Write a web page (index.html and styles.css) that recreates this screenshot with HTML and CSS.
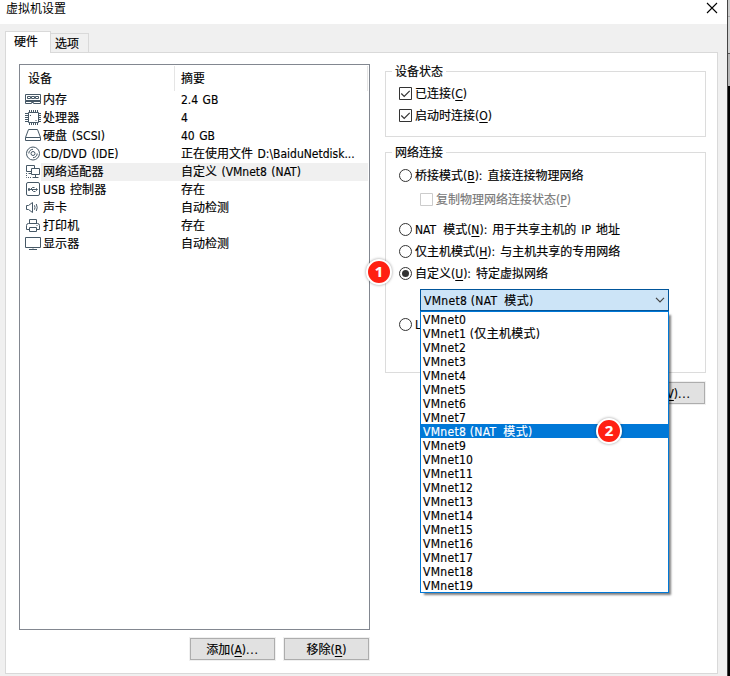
FILE: index.html
```html
<!DOCTYPE html>
<html lang="zh-CN">
<head>
<meta charset="utf-8">
<title>虚拟机设置</title>
<link rel="stylesheet" href="styles.css">
</head>
<body>
<div class="desktop">
<main class="window">
  <header class="titlebar">
    <h1>虚拟机设置</h1>
    <svg class="close" width="12" height="12" viewBox="0 0 12 12"><path d="M1 1l10 10M11 1L1 11"/></svg>
  </header>
  <nav class="tabs">
    <div class="tab active">硬件</div>
    <div class="tab">选项</div>
  </nav>
  <section class="page">
    <div class="left">
      <div class="list">
        <div class="head"><span class="name">设备</span><span class="summary">摘要</span></div>
        <div class="row"><svg class="icon" viewBox="0 0 18 18"><path d="M1.5 3.5h15v6h-15zM1.5 9.5v3h6v-1h2v1h7v-3M1.5 10.5h15"/><path d="M3.5 5.5h3v2h-3zM7.5 5.5h3v2h-3zM11.5 5.5h3v2h-3z"/></svg><span class="name">内存</span><span class="summary">2.4 GB</span></div>
        <div class="row"><svg class="icon" viewBox="0 0 18 18"><path d="M4.5 3.5h10v10h-10z"/><path d="M5.5 1v2M7.5 1v2M9.5 1v2M11.5 1v2M13.5 1v2M5.5 14v2M7.5 14v2M9.5 14v2M11.5 14v2M13.5 14v2M1 4.5h3M1 6.5h3M1 8.5h3M1 10.5h3M1 12.5h3M15 4.5h2M15 6.5h2M15 8.5h2M15 10.5h2M15 12.5h2"/><path d="M6 6.5h1M11.5 11.5h1"/></svg><span class="name">处理器</span><span class="summary">4</span></div>
        <div class="row"><svg class="icon" viewBox="0 0 18 18"><path d="M4.5 2.5h9l3 8v3h-15v-3zM1.5 10.5h15"/></svg><span class="name">硬盘 (SCSI)</span><span class="summary">40 GB</span></div>
        <div class="row"><svg class="icon" viewBox="0 0 18 18"><circle cx="9" cy="8.5" r="6.5"/><circle cx="9" cy="8.5" r="2"/><path d="M4.8 8.5A4.2 4.2 0 0 1 9 4.3M13.2 8.5A4.2 4.2 0 0 1 9 12.7"/></svg><span class="name">CD/DVD (IDE)</span><span class="summary">正在使用文件 D:\BaiduNetdisk...</span></div>
        <div class="row selected"><svg class="icon" viewBox="0 0 18 18"><path d="M7.5 8.5h-5v-6h8v3M4.5 10.5h3M7.5 5.5h8v6h-8zM11.5 11.5v3M8.5 14.5h6"/><path stroke-dasharray="1 1" d="M2.5 10v4.5H8"/></svg><span class="name">网络适配器</span><span class="summary">自定义 (VMnet8 (NAT)</span></div>
        <div class="row"><svg class="icon" viewBox="0 0 18 18"><rect x="2.5" y="1.5" width="13" height="13" rx="1.5"/><path d="M5 8.5h8M6.5 8.5l2-2h2M7.5 8.5l2 2h2M12.3 7.3l1.2 1.2-1.2 1.2M4.5 7.5h1v2h-1z"/></svg><span class="name">USB 控制器</span><span class="summary">存在</span></div>
        <div class="row"><svg class="icon" viewBox="0 0 18 18"><path d="M2.5 6.5h2l4-3v10l-4-3h-2zM10.5 6.3q1 2.2 0 4.4M12.3 5q1.8 3.5 0 7"/></svg><span class="name">声卡</span><span class="summary">自动检测</span></div>
        <div class="row"><svg class="icon" viewBox="0 0 18 18"><path d="M5.5 6.5v-4h7v4M5.5 12.5h-3v-4q0-2 2-2h9q2 0 2 2v4h-3M5.5 10.5h7v4h-7zM12.5 8.5h1"/></svg><span class="name">打印机</span><span class="summary">存在</span></div>
        <div class="row"><svg class="icon" viewBox="0 0 18 18"><path d="M1.5 2.5h15v10h-15zM9 12.5v1M5 14.5h8"/></svg><span class="name">显示器</span><span class="summary">自动检测</span></div>
      </div>
      <div class="actions">
        <button class="btn">添加(<u>A</u>)<span class="dots">...</span></button>
        <button class="btn">移除(<u>R</u>)</button>
      </div>
    </div>
    <div class="right">
      <div class="group status">
        <div class="legend">设备状态</div>
        <label class="option"><svg class="box" viewBox="0 0 13 13"><path class="frame" d="M.5.5h12v12H.5z"/><path d="M2.3 6.5l2.9 2.9 5.5-5.5"/></svg><span class="text">已连接(<u>C</u>)</span></label>
        <label class="option"><svg class="box" viewBox="0 0 13 13"><path class="frame" d="M.5.5h12v12H.5z"/><path d="M2.3 6.5l2.9 2.9 5.5-5.5"/></svg><span class="text">启动时连接(<u>O</u>)</span></label>
      </div>
      <div class="group network">
        <div class="legend">网络连接</div>
        <label class="option"><span class="radio"></span><span class="text">桥接模式(<u>B</u>):<i class="gap"></i>直接连接物理网络</span></label>
        <label class="option sub"><svg class="box" viewBox="0 0 13 13"><path d="M.5.5h12v12H.5z"/></svg><span class="text">复制物理网络连接状态(<u>P</u>)</span></label>
        <label class="option nat"><span class="radio"></span><span class="text">NAT<i class="gap wide"></i>模式(<u>N</u>):<i class="gap"></i>用于共享主机的<i class="gap"></i>IP<i class="gap"></i>地址</span></label>
        <label class="option"><span class="radio"></span><span class="text">仅主机模式(<u>H</u>):<i class="gap"></i>与主机共享的专用网络</span></label>
        <label class="option custom"><span class="radio on"></span><span class="text">自定义(<u>U</u>):<i class="gap"></i>特定虚拟网络</span><span class="badge one">1</span></label>
        <div class="combo">
          <span class="text">VMnet8 (NAT<i class="gap wide"></i>模式)</span>
          <svg width="10" height="6" viewBox="0 0 10 6"><path d="M1 .8l4 4 4-4"/></svg>
          <div class="menu">
            <div>VMnet0</div>
            <div>VMnet1 (仅主机模式)</div>
            <div>VMnet2</div>
            <div>VMnet3</div>
            <div>VMnet4</div>
            <div>VMnet5</div>
            <div>VMnet6</div>
            <div>VMnet7</div>
            <div class="current">VMnet8 (NAT<i class="gap wide"></i>模式)<span class="badge two">2</span></div>
            <div>VMnet9</div>
            <div>VMnet10</div>
            <div>VMnet11</div>
            <div>VMnet12</div>
            <div>VMnet13</div>
            <div>VMnet14</div>
            <div>VMnet15</div>
            <div>VMnet16</div>
            <div>VMnet17</div>
            <div>VMnet18</div>
            <div>VMnet19</div>
          </div>
        </div>
        <label class="option lan"><span class="radio"></span><span class="text">L</span></label>
      </div>
      <button class="btn advanced">高级(<u>V</u>)<span class="dots">...</span></button>
    </div>
  </section>
</main>
<aside class="behind"></aside>
</div>
</body>
</html>
```

FILE: styles.css
```css
* { box-sizing: border-box; }
body {
  margin: 0;
  font: 12px/18px "DejaVu Sans Condensed", "Noto Sans CJK SC", sans-serif;
  color: #000;
  background: #f0f0f0;
  overflow: hidden;
  -webkit-text-stroke: .15px;
}
u { text-underline-offset: 2px; text-decoration-thickness: 1px; text-decoration-skip-ink: none; }
.desktop { display: flex; width: 730px; height: 676px; }
.window { width: 728px; border-right: 1px solid #444; background: #f0f0f0; }
.behind {
  width: 2px;
  background: linear-gradient(#ccc 0 16px, #aaa 16px 17px, #d2d2d2 17px 53px, #555 53px 54px, #b8b8b8 54px 86px, #000 86px);
}

.titlebar { display: flex; justify-content: space-between; height: 24px; padding: 0 9px 0 6px; background: #fff; }
.titlebar h1 { margin: 0; font-size: 12px; font-weight: 400; line-height: 18px; -webkit-text-stroke: 0; }
.close { margin-top: 2px; fill: none; stroke: #000; stroke-width: 1.1; }

.tabs { display: flex; align-items: flex-end; height: 28px; padding-left: 5px; }
.tab { width: 38px; height: 19px; border: 1px solid #d9d9d9; border-left: 0; border-bottom: 0; padding-left: 4px; line-height: 20px; }
.tab.active { position: relative; z-index: 1; width: 46px; height: 22px; margin-bottom: -1px; border-left: 1px solid #d9d9d9; padding-left: 8px; background: #fff; }

.page { display: flex; gap: 15px; width: 713px; height: 622px; margin-left: 5px; padding: 11px 0 0 13px; border: 1px solid #d9d9d9; background: #fff; }
.left { flex: none; width: 351px; }
.list { height: 566px; border: 1px solid #828790; }
.head { display: flex; height: 26px; padding-top: 1px; line-height: 26px; }
.head .name { width: 155px; padding-left: 8px; border-right: 1px solid #e5e5e5; }
.head .summary { width: 193px; padding-left: 6px; border-right: 1px solid #e5e5e5; }
.row { display: flex; height: 18px; line-height: 18px; white-space: nowrap; word-spacing: 1px; }
.icon { flex: none; width: 18px; height: 18px; margin: 0 -1px 0 4px; fill: none; stroke: #465866; stroke-width: 1; }
.row .name { width: 134px; padding-left: 2px; letter-spacing: .1px; }
.row .summary { width: 193px; padding-left: 6px; }
.selected .name, .selected .summary { background: #f0f0f0; }

.actions { display: flex; justify-content: flex-end; gap: 9px; padding: 8px 1px 0 0; }
.btn {
  width: 85px;
  height: 22px;
  padding: 1px 0 0;
  border: 1px solid #adadad;
  outline: 1px solid #f0f0f0;
  background: #e1e1e1;
  color: #000;
  font: inherit;
  line-height: 21px;
}
.dots { letter-spacing: .8px; }

.right { flex: none; width: 321px; padding-top: 7px; }
.group { border: 1px solid #dcdcdc; padding-left: 13px; }
.legend { width: max-content; margin: -9px 0 0 -7px; padding: 0 3px 0 3px; background: #fff; line-height: 18px; }
.status { height: 66px; }
.network { height: 221px; margin-top: 15px; }
.option { display: flex; align-items: center; height: 22px; white-space: nowrap; }
.text { line-height: 18px; padding-top: 1px; }
.status .option:nth-child(2) { margin-top: 1px; }
.box { width: 13px; height: 13px; margin-right: 3px; fill: none; stroke: #333; stroke-width: 1.2; }
.frame { stroke-width: 1; }
.radio { display: flex; width: 13px; height: 13px; margin-right: 3px; border: 1px solid #333; border-radius: 50%; }
.radio.on::after { content: ""; width: 7px; height: 7px; margin: 2px; border-radius: 50%; background: #333; }
.gap { width: 5px; display: inline-block; }
.gap.wide { width: 7px; }
.network .option:nth-child(2) { margin-top: 2px; }
.sub { height: 24px; padding-left: 21px; color: #777; margin-top: 1px; }
.sub .box { stroke: #ccc; stroke-width: 1; }
.nat { margin-top: 7px; }
.custom { position: relative; }
.combo {
  position: relative;
  z-index: 2;
  display: flex;
  align-items: center;
  justify-content: space-between;
  width: 249px;
  height: 22px;
  margin: 5px 0 0 21px;
  padding: 0 3px 0 3px;
  border: 1px solid #00559b;
  background: #cce4f7;
  letter-spacing: .3px;
}
.combo > svg { fill: none; stroke: #444; stroke-width: 1.2; }
.menu {
  position: absolute;
  top: 21px;
  left: -1px;
  width: 249px;
  border: 1px solid #0078d7;
  background: #fff;
  box-shadow: 3px 3px 2px -1px rgba(0, 0, 0, .5);
}
.menu div { height: 14px; padding-left: 2px; line-height: 17px; }
.menu .current { position: relative; background: #0078d7; color: #fff; }
.lan { margin-top: 2px; }
.advanced { display: block; margin: 9px 1px 0 auto; padding-left: 4px; }

.badge {
  position: absolute;
  width: 26px;
  height: 26px;
  border: 2px solid #fff;
  border-radius: 50%;
  background: #ff2012;
  box-shadow: 0 0 3px rgba(0, 0, 0, .4);
  color: #fff;
  font: bold 15px/21px "Noto Sans", sans-serif;
  letter-spacing: 0;
  text-align: center;
}
.badge.one { left: -33px; top: -3px; }
.badge.two { left: 175px; top: -6px; }
```
